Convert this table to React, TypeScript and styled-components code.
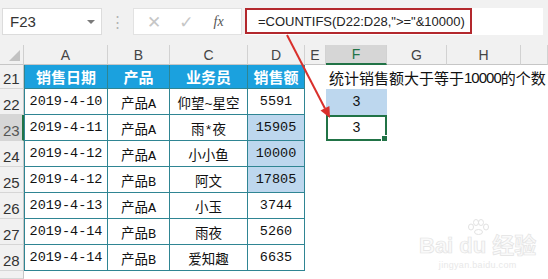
import styled, { createGlobalStyle } from "styled-components";

const GlobalStyle = createGlobalStyle`
  * { box-sizing: border-box; }
  body {
    margin: 0;
    background: #fff;
    font-family: "Liberation Sans", "Noto Sans CJK SC", sans-serif;
  }
`;

const TEAL = "#2f8593";
const GREEN = "#217346";

const Page = styled.div`
  position: relative;
  width: 548px;
  height: 279px;
  overflow: hidden;
  background: #fff;
`;

const Toolbar = styled.div`
  height: 45px;
  background: #f1f1f1;
  display: flex;
  align-items: flex-start;
  padding: 8px 5px 0 2px;
`;

const NameBox = styled.div`
  width: 100px;
  height: 27px;
  background: #fff;
  border: 1px solid #dcdcdc;
  display: flex;
  align-items: center;
  justify-content: space-between;
  padding: 0 6px 0 7px;
  font-size: 15px;
  color: #333;
`;

const Caret = styled.span`
  width: 0;
  height: 0;
  border-left: 4px solid transparent;
  border-right: 4px solid transparent;
  border-top: 4px solid #7a7a7a;
`;

const Grip = styled.div`
  width: 31px;
  height: 27px;
  display: flex;
  align-items: center;
  justify-content: center;
  color: #b4b4b4;
  font-size: 15px;
`;

const FxBox = styled.div`
  width: 109px;
  height: 27px;
  background: #fff;
  border: 1px solid #e2e2e2;
  display: flex;
  align-items: center;
  padding-left: 13px;
  gap: 18px;
`;

const ToolGlyph = styled.span<{ $fx?: boolean }>`
  font-size: ${(p) => (p.$fx ? "14px" : "17px")};
  color: ${(p) => (p.$fx ? "#555" : "#c6c6c6")};
  font-family: ${(p) => (p.$fx ? '"Liberation Serif", serif' : '"DejaVu Sans", sans-serif')};
  font-style: ${(p) => (p.$fx ? "italic" : "normal")};
  margin-left: ${(p) => (p.$fx ? "2px" : "0")};
`;

const FormulaArea = styled.div`
  flex: 1;
  height: 27px;
  margin-left: 3px;
  background: #fff;
`;

const Highlight = styled.div`
  width: 227px;
  height: 26px;
  border: 2px solid #b3282d;
  display: flex;
  align-items: center;
  padding-left: 11px;
  font-size: 13px;
  color: #222;
  white-space: nowrap;
`;

const Sheet = styled.div`
  display: grid;
  grid-template-columns: 24px 84px 62px 78px 57px 21px 61px 60px 74px 1fr;
  grid-template-rows: 20px 24px repeat(7, 26px) 1fr;
  height: 234px;
`;

const Corner = styled.div`
  background: #f1f1f1;
  border-right: 1px solid #cfcfcf;
  border-bottom: 1px solid #c6c6c6;
  display: flex;
  align-items: flex-end;
  justify-content: flex-end;
  padding: 0 3px 3px 0;
`;

const CornerMark = styled.span`
  width: 11px;
  height: 11px;
  background: #c2c2c2;
  clip-path: polygon(100% 0, 100% 100%, 0 100%);
`;

const ColHead = styled.div<{ $active?: boolean }>`
  background: ${(p) => (p.$active ? "#d6d6d6" : "#f1f1f1")};
  border-right: 1px solid #d2d2d2;
  border-bottom: ${(p) => (p.$active ? `2px solid ${GREEN}` : "1px solid #c6c6c6")};
  display: flex;
  align-items: center;
  justify-content: center;
  font-size: 14px;
  color: ${(p) => (p.$active ? GREEN : "#444")};
`;

const RowHead = styled.div<{ $active?: boolean }>`
  background: ${(p) => (p.$active ? "#d6d6d6" : "#f1f1f1")};
  border-right: ${(p) => (p.$active ? `2px solid ${GREEN}` : "1px solid #c6c6c6")};
  border-bottom: 1px solid #d6d6d6;
  display: flex;
  align-items: flex-end;
  padding: 0 0 1px 3px;
  font-size: 15px;
  color: ${(p) => (p.$active ? "#555" : "#333")};
`;

const Cell = styled.div<{ $head?: boolean; $sel?: boolean; $first?: boolean }>`
  background: ${(p) => (p.$head ? "#1ba1de" : p.$sel ? "#bdd7ee" : "#fff")};
  border-right: 1px solid ${TEAL};
  border-bottom: 1px solid ${TEAL};
  border-left: ${(p) => (p.$first ? `1px solid ${TEAL}` : "none")};
  display: flex;
  align-items: center;
  justify-content: center;
  white-space: nowrap;
  color: ${(p) => (p.$head ? "#fff" : "#111")};
  font-weight: ${(p) => (p.$head ? 700 : 400)};
  font-size: ${(p) => (p.$head ? "15px" : "13.5px")};
  font-family: ${(p) =>
    p.$head
      ? '"Noto Sans CJK SC", sans-serif'
      : '"Liberation Mono", "Noto Sans CJK SC", monospace'};
`;

const Blank = styled.div<{ $fill?: boolean; $active?: boolean }>`
  position: relative;
  background: ${(p) => (p.$fill ? "#bdd7ee" : "#fff")};
  border: ${(p) => (p.$active ? `2px solid ${GREEN}` : "none")};
  display: flex;
  align-items: center;
  justify-content: center;
  font-size: 14px;
  font-family: "Liberation Mono", monospace;
  color: #111;

  ${(p) =>
    p.$active &&
    `
    &::after {
      content: "";
      position: absolute;
      right: -4px;
      bottom: -4px;
      width: 6px;
      height: 6px;
      background: ${GREEN};
      border: 1px solid #fff;
    }
  `}
`;

const Note = styled.div`
  grid-column: 7 / -1;
  display: flex;
  align-items: center;
  padding-left: 3px;
  white-space: nowrap;
  font-size: 15px;
  color: #111;
  font-family: "Noto Sans CJK SC", sans-serif;
`;

const NoteNum = styled.span`
  font-family: "Liberation Sans", sans-serif;
  letter-spacing: -1px;
`;

const Overlay = styled.svg`
  position: absolute;
  left: 0;
  top: 0;
  pointer-events: none;
`;

const Watermark = styled.div`
  position: absolute;
  left: 419px;
  top: 219px;
  display: flex;
  flex-direction: column;
  align-items: center;
  color: #fafafa;
  -webkit-text-stroke: 0.7px #e3e3e3;
  pointer-events: none;
`;

const MarkLine = styled.div`
  display: flex;
  align-items: center;
  font-size: 22px;
  font-weight: 700;
  line-height: 1;
  font-family: "Liberation Sans", "Noto Sans CJK SC", sans-serif;
`;

const MarkUrl = styled.div`
  font-size: 9px;
  margin-top: 3px;
  color: #e8e8e8;
  -webkit-text-stroke: 0;
  letter-spacing: 0.3px;
`;

const columns = ["A", "B", "C", "D", "E", "F", "G", "H"];

const rows = [
  ["2019-4-10", "产品A", "仰望~星空", "5591"],
  ["2019-4-11", "产品A", "雨*夜", "15905"],
  ["2019-4-12", "产品A", "小小鱼", "10000"],
  ["2019-4-12", "产品B", "阿文", "17805"],
  ["2019-4-13", "产品A", "小玉", "3744"],
  ["2019-4-14", "产品B", "雨夜", "5260"],
  ["2019-4-14", "产品B", "爱知趣", "6635"],
];

const headers = ["销售日期", "产品", "业务员", "销售额"];

function App() {
  return (
    <Page>
      <GlobalStyle />
      <Toolbar>
        <NameBox>
          F23
          <Caret />
        </NameBox>
        <Grip>⋮</Grip>
        <FxBox>
          <ToolGlyph>✕</ToolGlyph>
          <ToolGlyph>✓</ToolGlyph>
          <ToolGlyph $fx>fx</ToolGlyph>
        </FxBox>
        <FormulaArea>
          <Highlight>=COUNTIFS(D22:D28,"&gt;="&amp;10000)</Highlight>
        </FormulaArea>
      </Toolbar>

      <Sheet>
        <Corner>
          <CornerMark />
        </Corner>
        {columns.map((c) => (
          <ColHead key={c} $active={c === "F"}>
            {c}
          </ColHead>
        ))}
        <ColHead />

        <RowHead>21</RowHead>
        {headers.map((h, i) => (
          <Cell key={h} $head $first={i === 0}>
            {h}
          </Cell>
        ))}
        <Blank />
        <Note>
          统计销售额大于等于<NoteNum>10000</NoteNum>的个数
        </Note>

        {rows.map((r, ri) => {
          const num = 22 + ri;
          return [
            <RowHead key={`h${num}`} $active={num === 23}>
              {num}
            </RowHead>,
            ...r.map((v, ci) => (
              <Cell key={`${num}-${ci}`} $first={ci === 0} $sel={ci === 3 && num >= 23 && num <= 25}>
                {v}
              </Cell>
            )),
            <Blank key={`e${num}`} />,
            <Blank key={`f${num}`} $fill={num === 22} $active={num === 23}>
              {num === 22 || num === 23 ? "3" : ""}
            </Blank>,
            <Blank key={`g${num}`} />,
            <Blank key={`i${num}`} />,
            <Blank key={`j${num}`} />,
          ];
        })}

        <RowHead />
      </Sheet>

      <Overlay width={548} height={279} viewBox="0 0 548 279">
        <line x1={287} y1={35} x2={325} y2={108.5} stroke="#d9302c" strokeWidth={2} />
        <polygon points="330,118 320.5,110.5 329.4,105.9" fill="#d9302c" />
      </Overlay>

      <Watermark>
        <svg width={24} height={16} viewBox="0 0 24 16">
          <g fill="none" stroke="#e2e2e2" strokeWidth={1}>
            <ellipse cx={5} cy={8} rx={2.5} ry={3} />
            <ellipse cx={10} cy={3.5} rx={2.5} ry={3} />
            <ellipse cx={15} cy={3.5} rx={2.5} ry={3} />
            <ellipse cx={20} cy={8} rx={2.5} ry={3} />
            <ellipse cx={12.5} cy={13} rx={4} ry={2.5} />
          </g>
        </svg>
        <MarkLine>Bai du 经验</MarkLine>
        <MarkUrl>jingyan.baidu.com</MarkUrl>
      </Watermark>
    </Page>
  );
}

export default App;
